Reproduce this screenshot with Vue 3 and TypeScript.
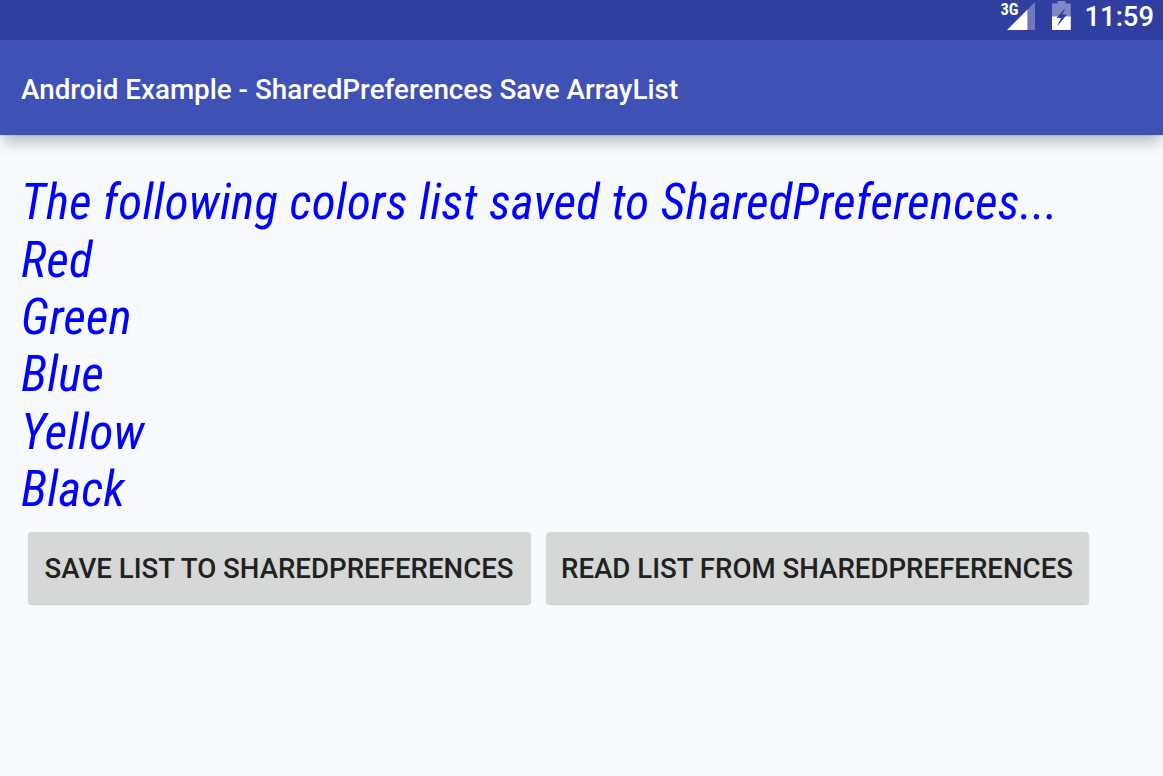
<script setup lang="ts">
import { ref } from 'vue';

const lines = ref<string[]>([
  'The following colors list saved to SharedPreferences...',
  'Red',
  'Green',
  'Blue',
  'Yellow',
  'Black',
]);
</script>

<template>
  <div class="screen">
    <div class="status-bar">
      <svg class="signal" width="36" height="32" viewBox="0 0 36 32">
        <path d="M35 2V30H27.5V9.5Z" fill="#7078bc" />
        <path d="M27.5 9.5V30H7Z" fill="#fff" />
        <text x="0.5" y="14.5" class="network">3G</text>
      </svg>
      <svg class="battery" width="19" height="29" viewBox="0 0 19 29">
        <path d="M5.5 0H13.5V2.5H18.7V29H0V2.5H5.5Z" fill="#8088c4" />
        <path d="M0 15.5H18.7V29H0Z" fill="#fff" />
        <path d="M13.5 7L4.5 17H9L5 25.5L15 13.5H10.5Z" fill="#303f9f" />
      </svg>
      <span class="clock">11:59</span>
    </div>
    <header class="app-bar">
      <h1 class="title">Android Example - SharedPreferences Save ArrayList</h1>
    </header>
    <main class="content">
      <p v-for="line in lines" :key="line" class="line">{{ line }}</p>
      <div class="actions">
        <button type="button" class="btn btn-save">SAVE LIST TO SHAREDPREFERENCES</button>
        <button type="button" class="btn btn-read">READ LIST FROM SHAREDPREFERENCES</button>
      </div>
    </main>
  </div>
</template>

<style>
body {
  margin: 0;
}
</style>

<style scoped>
.screen {
  width: 1163px;
  height: 776px;
  overflow: hidden;
  background: #f7fbff;
  font-family: Roboto, sans-serif;
}

.status-bar {
  position: relative;
  z-index: 1;
  display: flex;
  justify-content: flex-end;
  height: 40px;
  box-sizing: border-box;
  padding-right: 9px;
  background: #303f9f;
  color: #fff;
}

.network {
  font-family: 'Roboto Condensed', Roboto, sans-serif;
  font-size: 16.5px;
  font-weight: 700;
  fill: #fff;
}

.signal {
  flex: none;
}

.battery {
  flex: none;
  margin: 1px 14px 0 16px;
}

.clock {
  font-size: 27.4px;
  font-weight: 500;
  line-height: 35px;
}

.app-bar {
  display: flex;
  align-items: center;
  height: 95px;
  box-sizing: border-box;
  padding: 3px 0 0 21px;
  background: #3f51b5;
  box-shadow:
    0 1px 1px rgba(0, 0, 0, 0.08),
    0 11px 13px -3px rgba(0, 0, 0, 0.24);
}

.title {
  margin: 0;
  color: #fff;
  font-size: 27.8px;
  font-weight: 500;
}

.content {
  padding: 39.2px 21px 0;
}

.line {
  height: 57.4px;
  margin: 0;
  color: #0000ff;
  font-family: 'Roboto Condensed', Roboto, sans-serif;
  font-size: 49px;
  font-style: italic;
  letter-spacing: 0.24px;
  line-height: 57.4px;
  white-space: nowrap;
}

.actions {
  display: flex;
  gap: 15px;
  padding: 13.4px 0 0 6.5px;
}

.btn {
  height: 72px;
  padding: 2px 0 0;
  border: none;
  border-radius: 4px;
  background: #d6d7d7;
  color: #212121;
  font-family: inherit;
  font-size: 27.65px;
  font-weight: 500;
  white-space: nowrap;
  box-shadow: 0 1px 1px rgba(0, 0, 0, 0.2);
}

.btn-save {
  width: 503px;
}

.btn-read {
  width: 543px;
}
</style>
